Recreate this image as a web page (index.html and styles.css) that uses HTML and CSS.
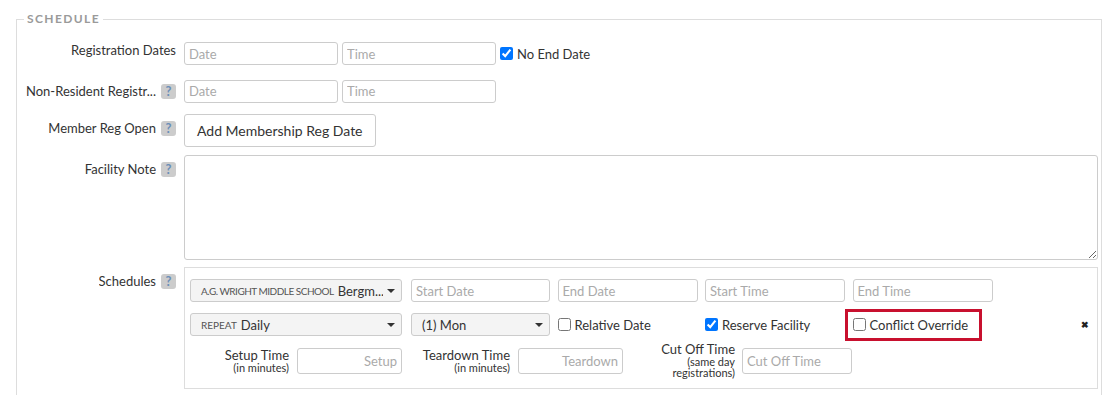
FILE: index.html
```html
<!DOCTYPE html>
<html lang="en">
<head>
    <meta charset="UTF-8">
    <title>Schedule</title>
    <link rel="stylesheet" href="styles.css">
</head>
<body>
    <fieldset class="schedule">
        <legend>Schedule</legend>

        <div class="form-row row-reg">
            <label class="form-label label-plain">Registration Dates</label>
            <div class="form-control">
                <input type="text" class="text-input date-input" placeholder="Date">
                <input type="text" class="text-input date-input" placeholder="Time">
                <label class="check"><input type="checkbox" checked> No End Date</label>
            </div>
        </div>

        <div class="form-row row-nonres">
            <label class="form-label"><span class="label-text">Non-Resident Registr...</span><span class="help">?</span></label>
            <div class="form-control">
                <input type="text" class="text-input date-input" placeholder="Date">
                <input type="text" class="text-input date-input" placeholder="Time">
            </div>
        </div>

        <div class="form-row row-member">
            <label class="form-label"><span class="label-text">Member Reg Open</span><span class="help">?</span></label>
            <div class="form-control">
                <button type="button" class="btn">Add Membership Reg Date</button>
            </div>
        </div>

        <div class="form-row">
            <label class="form-label"><span class="label-text">Facility Note</span><span class="help">?</span></label>
            <div class="form-control">
                <textarea class="note"></textarea>
            </div>
        </div>

        <div class="form-row">
            <label class="form-label"><span class="label-text">Schedules</span><span class="help">?</span></label>
            <div class="form-control">
                <div class="schedule-box">
                    <div class="sched-grid">
                        <div class="select-box wide-select">
                            <span class="select-prefix prefix-tight">A.G. Wright Middle School</span>
                            <span class="select-value">Bergm...</span>
                            <span class="caret"></span>
                        </div>
                        <input type="text" class="text-input" placeholder="Start Date">
                        <input type="text" class="text-input" placeholder="End Date">
                        <input type="text" class="text-input" placeholder="Start Time">
                        <input type="text" class="text-input end-time" placeholder="End Time">

                        <div class="select-box wide-select">
                            <span class="select-prefix">Repeat</span>
                            <span class="select-value">Daily</span>
                            <span class="caret"></span>
                        </div>
                        <div class="select-box">
                            <span class="select-value">(1) Mon</span>
                            <span class="caret"></span>
                        </div>
                        <label class="check"><input type="checkbox"> Relative Date</label>
                        <label class="check"><input type="checkbox" checked> Reserve Facility</label>
                        <label class="check highlight"><input type="checkbox"> Conflict Override</label>
                        <span class="remove">&#10006;</span>
                    </div>

                    <div class="minutes-row">
                        <div class="minutes-field">
                            <div class="minutes-label">Setup Time<small>(in minutes)</small></div>
                            <input type="text" class="text-input num-input" placeholder="Setup">
                        </div>
                        <div class="minutes-field">
                            <div class="minutes-label">Teardown Time<small>(in minutes)</small></div>
                            <input type="text" class="text-input num-input" placeholder="Teardown">
                        </div>
                        <div class="minutes-field cutoff">
                            <div class="minutes-label">Cut Off Time<small>(same day<br>registrations)</small></div>
                            <input type="text" class="text-input" placeholder="Cut Off Time">
                        </div>
                    </div>
                </div>
                <button type="button" class="btn btn-add">Add Schedule</button>
            </div>
        </div>
    </fieldset>
</body>
</html>
```

FILE: styles.css
```css
/* Basic styles */
body {
    font-family: Lato, "Open Sans", sans-serif;
    font-size: 13px;
    color: #333;
    margin: 0;
    padding: 0;
    background-color: #fff;
    overflow: hidden;
}

.schedule {
    margin: 12px 8px 0 16px;
    padding: 16px 2px 0 7px;
    border: 1px solid #ddd;
    border-bottom: none;
    min-width: 0;
}
.schedule legend {
    padding: 0 3px;
    margin-left: 0;
    font-size: 12px;
    line-height: 14px;
    font-weight: bold;
    letter-spacing: 1.4px;
    text-transform: uppercase;
    color: #9a9a9a;
}

/* Form rows */
.form-row {
    display: flex;
    gap: 8px;
    margin-bottom: 7px;
}
.row-reg {
    margin-bottom: 12px;
}
.row-nonres {
    margin-bottom: 9px;
}
.row-member {
    margin-bottom: 8px;
}
.form-label {
    width: 152px;
    flex-shrink: 0;
    display: flex;
    justify-content: flex-end;
    align-items: center;
    gap: 5px;
    height: 28px;
    line-height: 16px;
}
.label-plain {
    height: 15px;
}
.label-text {
    white-space: nowrap;
    overflow: hidden;
}
.help {
    flex-shrink: 0;
    width: 15px;
    height: 15px;
    border-radius: 3px;
    background-color: #ccc;
    color: #6a8fb8;
    font-size: 13px;
    font-weight: bold;
    line-height: 15px;
    text-align: center;
}
.form-control {
    flex: 1;
    display: flex;
    flex-wrap: wrap;
    align-items: center;
    gap: 4px;
}

/* Inputs */
.text-input {
    box-sizing: border-box;
    height: 23px;
    margin: 0;
    padding: 0 4px;
    border: 1px solid #ccc;
    border-radius: 3px;
    font-family: inherit;
    font-size: 13px;
    color: #333;
    min-width: 0;
}
.text-input::placeholder {
    color: #aaa;
}
.date-input {
    width: 154px;
}
.check {
    display: inline-flex;
    align-items: center;
    gap: 3px;
    white-space: nowrap;
}
.check input {
    width: 13px;
    height: 13px;
    margin: 0 1px 0 0;
}
.btn {
    box-sizing: border-box;
    height: 33px;
    padding: 0 12px;
    border: 1px solid #ccc;
    border-radius: 3px;
    background-color: #fff;
    font-family: inherit;
    font-size: 14px;
    color: #333;
}
.note {
    box-sizing: border-box;
    width: 914px;
    height: 105px;
    margin: 0;
    border: 1px solid #ccc;
    border-radius: 3px;
    display: block;
}

/* Schedules box */
.schedule-box {
    box-sizing: border-box;
    width: 914px;
    border: 1px solid #ddd;
    padding: 11px 6px 10px 5px;
}
.sched-grid {
    display: grid;
    grid-template-columns: 213.5px 139px 140px 140px 140px 1fr;
    column-gap: 7.5px;
    row-gap: 11px;
    align-items: center;
}
.wide-select {
    width: 212px;
}
.end-time {
    grid-column: 5 / span 2;
    width: 140px;
}
.select-box {
    box-sizing: border-box;
    height: 23px;
    display: flex;
    align-items: center;
    gap: 4px;
    padding: 0 6px 0 10px;
    border: 1px solid #ccc;
    border-radius: 3px;
    background-color: #f4f4f4;
    white-space: nowrap;
    overflow: hidden;
}
.select-prefix {
    font-size: 10px;
    text-transform: uppercase;
    color: #555;
    padding-top: 1px;
}
.prefix-tight {
    letter-spacing: -0.5px;
}
.select-value {
    flex: 1;
    overflow: hidden;
}
.caret {
    flex-shrink: 0;
    width: 0;
    height: 0;
    border-left: 4px solid transparent;
    border-right: 4px solid transparent;
    border-top: 4px solid #333;
}
.highlight {
    outline: 3px solid #c8102e;
    outline-offset: 5px;
    width: fit-content;
    padding-right: 6px;
}
.remove {
    justify-self: end;
    margin-right: 2px;
    font-size: 9px;
    color: #222;
    font-weight: bold;
}

/* Setup / teardown row */
.minutes-row {
    display: flex;
    align-items: center;
    gap: 9px;
    margin-top: 7px;
}
.minutes-field {
    display: flex;
    align-items: center;
    gap: 8px;
}
.minutes-label {
    width: 99px;
    text-align: right;
    line-height: 13px;
}
.minutes-label small {
    display: block;
    font-size: 11px;
    line-height: 11px;
}
.num-input {
    width: 105px;
    height: 26px;
    text-align: right;
}
.cutoff .minutes-label {
    width: 103px;
}
.cutoff .text-input {
    width: 110px;
    height: 26px;
}
.cutoff {
    gap: 7px;
}

.btn-add {
    margin-top: 2px;
    width: 108px;
}
```
